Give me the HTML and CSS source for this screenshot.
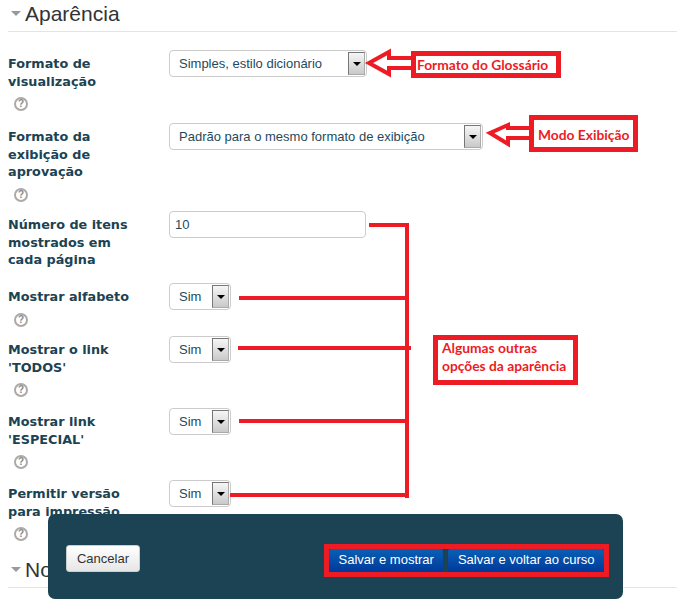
FILE: index.html
```html
<!DOCTYPE html>
<html lang="pt-BR">
<head>
    <meta charset="UTF-8">
    <meta name="viewport" content="width=device-width, initial-scale=1.0">
    <title>Aparência</title>
    <link rel="stylesheet" href="styles.css">
</head>
<body>
    <div class="page">
        <h2 class="section-title"><span class="caret"></span>Aparência</h2>

        <form class="settings">
            <div class="setting">
                <div class="setting-label">Formato de visualização</div>
                <span class="help">?</span>
            </div>
            <div class="select select-medium">
                <span class="select-text">Simples, estilo dicionário</span>
                <span class="select-arrow"></span>
            </div>

            <div class="setting">
                <div class="setting-label">Formato da exibição de aprovação</div>
                <span class="help">?</span>
            </div>
            <div class="select select-wide">
                <span class="select-text">Padrão para o mesmo formato de exibição</span>
                <span class="select-arrow"></span>
            </div>

            <div class="setting">
                <div class="setting-label">Número de itens mostrados em cada página</div>
            </div>
            <div class="text-field">10</div>

            <div class="setting">
                <div class="setting-label">Mostrar alfabeto</div>
                <span class="help">?</span>
            </div>
            <div class="select select-small">
                <span class="select-text">Sim</span>
                <span class="select-arrow"></span>
            </div>

            <div class="setting">
                <div class="setting-label">Mostrar o link 'TODOS'</div>
                <span class="help">?</span>
            </div>
            <div class="select select-small">
                <span class="select-text">Sim</span>
                <span class="select-arrow"></span>
            </div>

            <div class="setting">
                <div class="setting-label">Mostrar link 'ESPECIAL'</div>
                <span class="help">?</span>
            </div>
            <div class="select select-small">
                <span class="select-text">Sim</span>
                <span class="select-arrow"></span>
            </div>

            <div class="setting">
                <div class="setting-label">Permitir versão para impressão</div>
                <span class="help">?</span>
            </div>
            <div class="select select-small">
                <span class="select-text">Sim</span>
                <span class="select-arrow"></span>
            </div>
        </form>

        <h2 class="section-title"><span class="caret"></span>Notas</h2>

        <!-- red annotations drawn over the screenshot -->
        <svg class="marks" width="677" height="605" viewBox="0 0 677 605">
            <g fill="none" stroke="#ed1c24" stroke-width="4" stroke-linecap="square">
                <polyline points="411,58 389,58 389,52 369,63 389,74 389,68 411,68"/>
                <polyline points="530,128 508,128 508,125 490,133 508,144 508,138 530,138"/>
                <polyline points="371,225 407,225 407,496"/>
                <line x1="241" y1="298" x2="407" y2="298"/>
                <line x1="240" y1="348" x2="409" y2="348"/>
                <line x1="241" y1="421" x2="407" y2="421"/>
                <line x1="232" y1="495" x2="407" y2="495"/>
            </g>
        </svg>
        <div class="note note-glossary">Formato do Glossário</div>
        <div class="note note-mode">Modo Exibição</div>
        <div class="note note-others">Algumas outras<br>opções da aparência</div>

        <div class="action-bar">
            <button type="button" class="btn-cancel">Cancelar</button>
            <div class="save-group">
                <button type="button" class="btn-save">Salvar e mostrar</button>
                <button type="button" class="btn-save">Salvar e voltar ao curso</button>
            </div>
        </div>
    </div>
</body>
</html>
```

FILE: styles.css
```css
body {
    margin: 0;
    background-color: #fff;
    font-family: 'Liberation Sans', Arial, sans-serif;
    font-size: 13px;
    color: #333;
}
.page {
    position: relative;
    height: 605px;
    padding-left: 8px;
    box-sizing: border-box;
    overflow: hidden;
}
.section-title {
    display: flex;
    align-items: center;
    height: 27px;
    margin: 0;
    padding-bottom: 4px;
    border-bottom: 1px solid #e5e5e5;
    font-size: 21px;
    font-weight: normal;
    color: #333;
}
.caret {
    width: 0;
    height: 0;
    margin: 0 4px 0 3px;
    border-left: 5px solid transparent;
    border-right: 5px solid transparent;
    border-top: 5px solid #999;
}
.settings {
    display: grid;
    grid-template-columns: 161px 1fr;
    grid-template-rows: 73px 88px 72px 53px 72px 72px 76px;
    margin-top: 18px;
}
.setting-label {
    width: 125px;
    padding-top: 5px;
    font-family: 'DejaVu Sans', Verdana, sans-serif;
    font-size: 12.8px;
    font-weight: bold;
    line-height: 17.7px;
    color: #1b4353;
}
.help {
    display: block;
    width: 10px;
    height: 10px;
    margin: 7px 0 0 6px;
    border: 2px solid #aaa;
    border-radius: 50%;
    font-size: 10px;
    font-weight: bold;
    line-height: 10px;
    text-align: center;
    color: #888;
}
.select, .text-field {
    display: flex;
    align-items: center;
    height: 27px;
    box-sizing: border-box;
    background-color: #fff;
    border: 1px solid #ccc;
    border-radius: 4px;
    color: #1f4a5c;
}
.select {
    justify-content: space-between;
    padding: 1px;
}
.select-medium { width: 198px; }
.select-wide { width: 314px; }
.select-small { width: 62px; }
.select-text {
    padding-left: 8px;
    white-space: nowrap;
}
.select-arrow {
    display: flex;
    align-items: center;
    justify-content: center;
    width: 17px;
    height: 100%;
    box-sizing: border-box;
    border: 1px solid #777;
    border-right-color: #aaa;
    border-bottom-color: #aaa;
    background: linear-gradient(#f6f6f6, #c9c9c9);
}
.select-arrow::after {
    content: "";
    width: 0;
    height: 0;
    border-left: 4px solid transparent;
    border-right: 4px solid transparent;
    border-top: 4px solid #000;
}
.text-field {
    width: 197px;
    padding-left: 5px;
}
.marks {
    position: absolute;
    top: 0;
    left: 0;
    pointer-events: none;
}
.note {
    position: absolute;
    box-sizing: border-box;
    display: flex;
    align-items: center;
    background-color: #fff;
    border: 5px solid #ed1c24;
    font-family: Lato, 'Open Sans', sans-serif;
    font-size: 13.8px;
    font-weight: bold;
    color: #ed1c24;
}
.note-glossary {
    top: 51px;
    left: 411px;
    width: 150px;
    height: 27px;
    padding-left: 1px;
}
.note-mode {
    top: 115px;
    left: 529px;
    width: 109px;
    height: 37px;
    padding: 1px 0 0 4px;
}
.note-others {
    top: 335px;
    left: 433px;
    width: 145px;
    height: 50px;
    padding: 0 0 6px 4px;
    line-height: 18px;
}
.action-bar {
    position: absolute;
    top: 514px;
    left: 48px;
    display: flex;
    align-items: flex-end;
    justify-content: space-between;
    width: 575px;
    height: 85px;
    box-sizing: border-box;
    padding: 0 14px 22px 18px;
    background-color: #1b4353;
    border-radius: 7px;
}
.action-bar button {
    font-family: 'Liberation Sans', Arial, sans-serif;
    font-size: 13px;
    cursor: pointer;
}
.btn-cancel {
    width: 74px;
    height: 27px;
    margin-bottom: 5px;
    padding: 0;
    background: linear-gradient(#fff, #e6e6e6);
    border: 1px solid #ccc;
    border-radius: 3px;
    color: #333;
}
.save-group {
    display: flex;
    gap: 5px;
    border: 5px solid #ed1c24;
}
.btn-save {
    height: 23px;
    padding: 0 9.5px 2px;
    background: linear-gradient(#0a5fb4, #003a9c);
    border: none;
    border-radius: 2px;
    color: #fff;
}
```
